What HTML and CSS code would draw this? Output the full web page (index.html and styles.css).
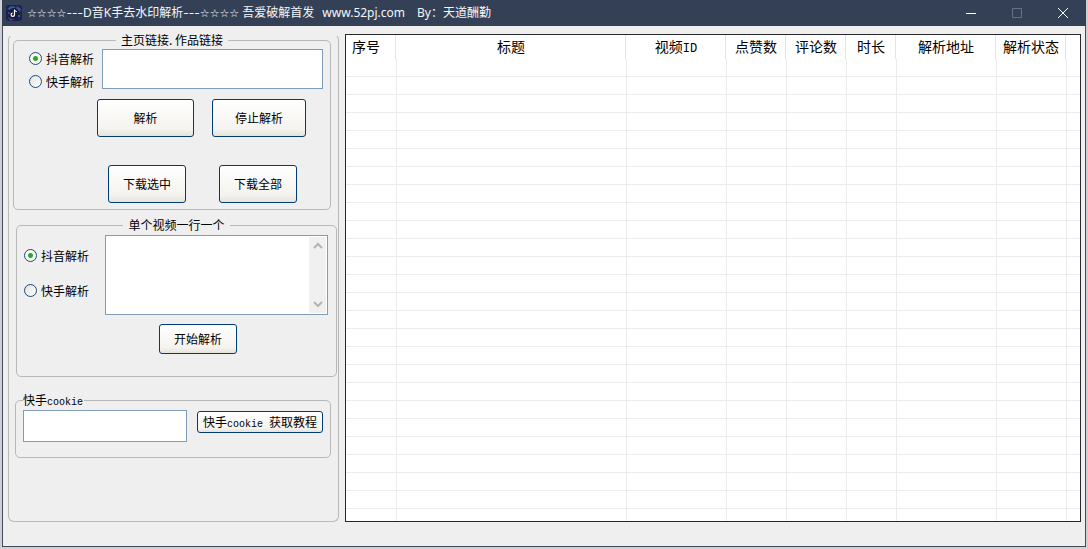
FILE: index.html
```html
<!DOCTYPE html>
<html lang="zh-CN">
<head>
<meta charset="utf-8">
<title>D音K手去水印解析</title>
<link rel="stylesheet" href="styles.css">
</head>
<body>
<div class="window">
  <header class="titlebar">
    <svg class="app-icon" viewBox="0 0 16 16" aria-hidden="true">
      <rect width="16" height="16" rx="3" fill="#1c2348"/>
      <path d="M1 4l4-3 5 1-5 3zM11 1l4 3-1 3-4-3zM2 12l3 2 4 1-5 .5z" fill="#3c55a0"/>
      <circle cx="8" cy="8" r="5" fill="#141a3a"/>
      <circle cx="3" cy="8" r="1" fill="#5a48a0"/><circle cx="13" cy="11" r="1" fill="#4b6fc0"/>
      <path d="M8.500 4.500v5.200a1.700 1.700 0 1 1-1.700-1.700M8.500 4.500c.2 1.300 1 2 2.300 2.100" fill="none" stroke="#fff" stroke-width="1.200"/>
    </svg>
    <h1 class="title"><span class="stars">☆☆☆☆</span><span class="dashes">---</span>D音K手去水印解析<span class="dashes">---</span><span class="stars">☆☆☆☆</span> 吾爱破解首发<span class="site">www.52pj.com</span><span class="author">By：天道酬勤</span></h1>
    <div class="controls">
      <button class="control" aria-label="最小化"><svg viewBox="0 0 12 12"><path d="M1 6.500h10"/></svg></button>
      <button class="control control-off" aria-label="最大化" disabled><svg viewBox="0 0 12 12"><path d="M1.500 1.500h9v9h-9z"/></svg></button>
      <button class="control" aria-label="关闭"><svg viewBox="0 0 12 12"><path d="M1 1l10 10M11 1L1 11"/></svg></button>
    </div>
  </header>
  <main class="content">
    <div class="panel">
      <fieldset class="group group-home">
        <legend>主页链接. 作品链接</legend>
        <div class="row">
          <div class="radios">
            <label class="radio"><input type="radio" name="home" checked>抖音解析</label>
            <label class="radio"><input type="radio" name="home">快手解析</label>
          </div>
          <textarea class="box box-link" aria-label="链接"></textarea>
        </div>
        <div class="row actions">
          <button class="btn btn-parse">解析</button>
          <button class="btn btn-stop">停止解析</button>
        </div>
        <div class="row downloads">
          <button class="btn">下载选中</button>
          <button class="btn">下载全部</button>
        </div>
      </fieldset>
      <fieldset class="group group-single">
        <legend>单个视频一行一个</legend>
        <div class="row">
          <div class="radios">
            <label class="radio"><input type="radio" name="single" checked>抖音解析</label>
            <label class="radio"><input type="radio" name="single">快手解析</label>
          </div>
          <div class="box list-box">
            <textarea class="list-input" aria-label="视频列表"></textarea>
            <div class="scrollbar">
              <svg viewBox="0 0 10 8"><path d="M1 6l4-4 4 4"/></svg>
              <svg viewBox="0 0 10 8"><path d="M1 2l4 4 4-4"/></svg>
            </div>
          </div>
        </div>
        <button class="btn btn-start">开始解析</button>
      </fieldset>
      <fieldset class="group group-cookie">
        <legend>快手<span class="mono">cookie</span></legend>
        <div class="row cookie-row">
          <input class="box box-cookie" type="text" aria-label="快手cookie">
          <button class="btn btn-guide">快手<span class="mono">cookie </span>获取教程</button>
        </div>
      </fieldset>
    </div>
    <div class="grid">
      <table class="list">
        <colgroup><col class="c-no"><col class="c-title"><col class="c-wide"><col class="c-count"><col class="c-count"><col class="c-time"><col class="c-wide"><col class="c-state"><col></colgroup>
        <thead>
          <tr><th>序号</th><th>标题</th><th>视频<span class="mono-lg">ID</span></th><th>点赞数</th><th>评论数</th><th>时长</th><th>解析地址</th><th>解析状态</th><th></th></tr>
        </thead>
        <tbody>
          <tr><td></td><td></td><td></td><td></td><td></td><td></td><td></td><td></td><td></td></tr>
          <tr><td></td><td></td><td></td><td></td><td></td><td></td><td></td><td></td><td></td></tr>
          <tr><td></td><td></td><td></td><td></td><td></td><td></td><td></td><td></td><td></td></tr>
          <tr><td></td><td></td><td></td><td></td><td></td><td></td><td></td><td></td><td></td></tr>
          <tr><td></td><td></td><td></td><td></td><td></td><td></td><td></td><td></td><td></td></tr>
          <tr><td></td><td></td><td></td><td></td><td></td><td></td><td></td><td></td><td></td></tr>
          <tr><td></td><td></td><td></td><td></td><td></td><td></td><td></td><td></td><td></td></tr>
          <tr><td></td><td></td><td></td><td></td><td></td><td></td><td></td><td></td><td></td></tr>
          <tr><td></td><td></td><td></td><td></td><td></td><td></td><td></td><td></td><td></td></tr>
          <tr><td></td><td></td><td></td><td></td><td></td><td></td><td></td><td></td><td></td></tr>
          <tr><td></td><td></td><td></td><td></td><td></td><td></td><td></td><td></td><td></td></tr>
          <tr><td></td><td></td><td></td><td></td><td></td><td></td><td></td><td></td><td></td></tr>
          <tr><td></td><td></td><td></td><td></td><td></td><td></td><td></td><td></td><td></td></tr>
          <tr><td></td><td></td><td></td><td></td><td></td><td></td><td></td><td></td><td></td></tr>
          <tr><td></td><td></td><td></td><td></td><td></td><td></td><td></td><td></td><td></td></tr>
          <tr><td></td><td></td><td></td><td></td><td></td><td></td><td></td><td></td><td></td></tr>
          <tr><td></td><td></td><td></td><td></td><td></td><td></td><td></td><td></td><td></td></tr>
          <tr><td></td><td></td><td></td><td></td><td></td><td></td><td></td><td></td><td></td></tr>
          <tr><td></td><td></td><td></td><td></td><td></td><td></td><td></td><td></td><td></td></tr>
          <tr><td></td><td></td><td></td><td></td><td></td><td></td><td></td><td></td><td></td></tr>
          <tr><td></td><td></td><td></td><td></td><td></td><td></td><td></td><td></td><td></td></tr>
          <tr><td></td><td></td><td></td><td></td><td></td><td></td><td></td><td></td><td></td></tr>
          <tr><td></td><td></td><td></td><td></td><td></td><td></td><td></td><td></td><td></td></tr>
          <tr><td></td><td></td><td></td><td></td><td></td><td></td><td></td><td></td><td></td></tr>
          <tr><td></td><td></td><td></td><td></td><td></td><td></td><td></td><td></td><td></td></tr>
          <tr class="partial"><td></td><td></td><td></td><td></td><td></td><td></td><td></td><td></td><td></td></tr>
        </tbody>
      </table>
    </div>
  </main>
</div>
</body>
</html>
```
FILE: styles.css
```css
*, *::before, *::after { box-sizing: border-box; }

body {
  margin: 0;
  padding: 0 2px 2px;
  background: #cfcfd4;
  color: #000;
  font: 12px/16px "Noto Sans CJK SC", sans-serif;
}

button, input, textarea { margin: 0; font: inherit; color: inherit; }

.window {
  background: #efefef;
  border: 1px solid #444a58;
  border-top: 0;
}

.titlebar {
  display: flex;
  align-items: center;
  height: 26px;
  margin: 0 -1px;
  padding-left: 4px;
  background: #344056;
  color: #f4f6fa;
}
.app-icon { width: 16px; height: 16px; flex: none; }
.title {
  flex: 1;
  margin: 0 0 0 5px;
  font: 12px/16px "Noto Sans", "Noto Sans CJK SC", sans-serif;
  white-space: nowrap;
}
.stars { font-family: "DejaVu Sans", sans-serif; font-size: 11px; line-height: 1; }
.dashes { font-family: Inter, sans-serif; line-height: 1; }
.site { margin-left: 8px; }
.author { margin-left: 12px; }
.controls { display: flex; height: 100%; }
.control {
  display: flex;
  align-items: center;
  justify-content: center;
  width: 46px;
  padding: 0;
  border: 0;
  background: none;
}
.control svg { width: 12px; height: 12px; fill: none; stroke: #fff; stroke-width: 1; }
.control-off svg { stroke: #667084; }

.content {
  display: flex;
  gap: 6px;
  padding: 8px 4px 24px 5px;
}

.panel {
  flex: none;
  width: 331px;
  border: 1px solid #b8b8b8;
  border-top-color: transparent;
  border-radius: 6px;
}

.group {
  min-width: 0;
  padding: 2px 0 0;
  border: 1px solid #b8b8b8;
  border-radius: 5px;
}
.group legend { height: 10px; margin: 0 auto; padding: 0 5px; line-height: 10px; }
.group-home { margin: 0 7px 0 4px; padding-bottom: 6px; }
.group-single { margin: 10px 1px 0 7px; padding-bottom: 22px; }
.group-cookie { margin: 18px 7px 0 6px; }
.group-cookie legend { margin: 0 0 0 7px; padding: 0 1px 0 0; }

.row { display: flex; align-items: flex-start; }

.radios { flex: 1; display: flex; flex-direction: column; }
.group-home .radios { padding-left: 15px; }
.group-single .radios { padding: 6px 0 0 7px; }
.radio { display: flex; align-items: center; gap: 4px; height: 23px; }
.group-single .radio { height: 35px; }
.radio input {
  appearance: none;
  width: 13px;
  height: 13px;
  border: 1px solid #1d4a7c;
  border-radius: 50%;
  background: linear-gradient(135deg, #e2e2dd, #fff);
}
.radio input:checked { background: radial-gradient(circle, #2fa52f 0 2px, #f4faf2 3px); }

.box {
  padding: 2px;
  border: 1px solid #7f9db9;
  border-radius: 0;
  background: #fff;
  outline: 0;
  resize: none;
}
.box-link { width: 221px; height: 40px; margin: 2px 7px 0 0; }
.list-box { display: flex; width: 223px; height: 80px; margin: 3px 8px 0 0; padding: 1px; }
.list-input { flex: 1; min-width: 0; padding: 1px; border: 0; outline: 0; resize: none; overflow: hidden; }
.scrollbar {
  display: flex;
  flex-direction: column;
  justify-content: space-between;
  align-items: center;
  width: 17px;
  padding: 5px 0;
  background: #f0f0f0;
}
.scrollbar svg { width: 10px; height: 8px; fill: none; stroke: #b4b4b4; stroke-width: 2; }

.btn {
  width: 78px;
  height: 38px;
  padding: 0;
  border: 1px solid #003c74;
  border-radius: 3px;
  background: linear-gradient(#fff, #f4f3ef 80%, #e6e3da);
  white-space: nowrap;
}
.btn-parse { width: 97px; }
.btn-stop { width: 94px; }
.actions { gap: 18px; margin-top: 6px; padding-left: 83px; }
.downloads { gap: 33px; margin-top: 28px; padding-left: 94px; }
.btn-start { display: block; height: 30px; margin: 9px 0 0 142px; }
.cookie-row { gap: 10px; padding: 3px 7px 15px; }
.box-cookie { flex: 1; min-width: 0; height: 32px; }
.btn-guide { width: 126px; height: 22px; margin-top: 1px; line-height: 20px; }

.mono { font-family: "Liberation Mono", monospace; font-size: 10px; line-height: 1; white-space: pre; }
.mono-lg { font-family: "Liberation Mono", monospace; font-size: 12px; line-height: 1; }

.grid { flex: 1; min-width: 0; border: 1px solid #26282c; background: #fff; overflow: hidden; }
.list { width: 100%; table-layout: fixed; border-collapse: separate; border-spacing: 0; }
.c-no { width: 51px; }
.c-title { width: 230px; }
.c-wide { width: 100px; }
.c-count { width: 60px; }
.c-time { width: 50px; }
.c-state { width: 70px; }
.list th {
  height: 24px;
  padding: 0 2px 0 0;
  font-size: 14px;
  font-weight: 400;
  line-height: 22px;
  vertical-align: top;
  white-space: nowrap;
  background: linear-gradient(#e4e4e4, #e4e4e4) right 1px top / 1px 100% no-repeat;
}
.list th:first-child { padding-left: 6px; text-align: left; }
.list th:last-child { background: none; }
.list td { height: 18px; padding: 0; border: solid #ebecec; border-width: 0 1px 1px 0; }
.list td:last-child { border-right: 0; }
.list .partial td { height: 12px; border-bottom: 0; }
```
